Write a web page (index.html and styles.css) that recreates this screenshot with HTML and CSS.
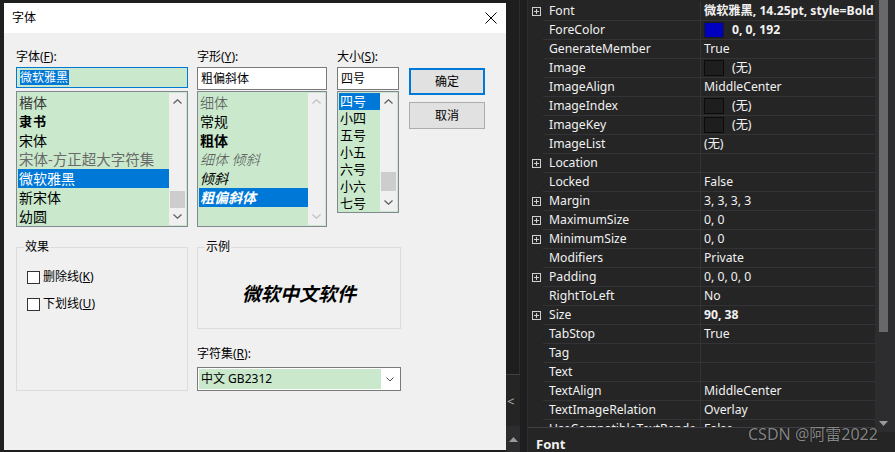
FILE: index.html
```html
<!DOCTYPE html>
<html lang="zh-CN">
<head>
<meta charset="utf-8">
<title>字体</title>
<link rel="stylesheet" href="styles.css">
</head>
<body>
<div class="screen">
  <div class="edge-left"></div>

  <div class="dialog">
    <div class="titlebar">
      <span class="title">字体</span>
      <svg class="close" viewBox="0 0 12 12" width="12" height="12"><path d="M0.5 0.5 L11.5 11.5 M11.5 0.5 L0.5 11.5" stroke="#000" stroke-width="1" fill="none"/></svg>
    </div>

    <div class="dlg-body">
      <div class="top-row">
        <div class="col col-font">
          <div class="lbl">字体(<u>F</u>):</div>
          <div class="input input-focus"><span class="sel-text">微软雅黑</span></div>
          <div class="list list-tall">
            <div class="items">
              <div class="item it-kai">楷体</div>
              <div class="item it-li">隶书</div>
              <div class="item">宋体</div>
              <div class="item it-gray">宋体-方正超大字符集</div>
              <div class="item selected">微软雅黑</div>
              <div class="item">新宋体</div>
              <div class="item">幼圆</div>
            </div>
            <div class="vscroll">
              <div class="sbtn"><svg viewBox="0 0 9 5" width="9" height="5"><path d="M0.5 4.5 L4.5 0.8 L8.5 4.5" stroke="#606060" stroke-width="1.3" fill="none"/></svg></div>
              <div class="strack"></div>
              <div class="sthumb"></div>
              <div class="sbtn"><svg viewBox="0 0 9 5" width="9" height="5"><path d="M0.5 0.5 L4.5 4.2 L8.5 0.5" stroke="#606060" stroke-width="1.3" fill="none"/></svg></div>
            </div>
          </div>
        </div>

        <div class="col col-style">
          <div class="lbl">字形(<u>Y</u>):</div>
          <div class="input">粗偏斜体</div>
          <div class="list list-tall">
            <div class="items">
              <div class="item it-thin">细体</div>
              <div class="item">常规</div>
              <div class="item it-bold">粗体</div>
              <div class="item it-thin it-italic">细体 倾斜</div>
              <div class="item it-italic">倾斜</div>
              <div class="item selected it-bold it-italic">粗偏斜体</div>
            </div>
            <div class="vscroll">
              <div class="sbtn"><svg viewBox="0 0 9 5" width="9" height="5"><path d="M0.5 4.5 L4.5 0.8 L8.5 4.5" stroke="#c2c2c2" stroke-width="1.3" fill="none"/></svg></div>
              <div class="strack"></div>
              <div class="sbtn"><svg viewBox="0 0 9 5" width="9" height="5"><path d="M0.5 0.5 L4.5 4.2 L8.5 0.5" stroke="#c2c2c2" stroke-width="1.3" fill="none"/></svg></div>
            </div>
          </div>
        </div>

        <div class="col col-size">
          <div class="lbl">大小(<u>S</u>):</div>
          <div class="input">四号</div>
          <div class="list list-short">
            <div class="items">
              <div class="item item-s selected">四号</div>
              <div class="item item-s">小四</div>
              <div class="item item-s">五号</div>
              <div class="item item-s">小五</div>
              <div class="item item-s">六号</div>
              <div class="item item-s">小六</div>
              <div class="item item-s">七号</div>
            </div>
            <div class="vscroll vscroll-s">
              <div class="sbtn"><svg viewBox="0 0 9 5" width="9" height="5"><path d="M0.5 4.5 L4.5 0.8 L8.5 4.5" stroke="#606060" stroke-width="1.3" fill="none"/></svg></div>
              <div class="strack"></div>
              <div class="sthumb sthumb-s"></div>
              <div class="sbtn"><svg viewBox="0 0 9 5" width="9" height="5"><path d="M0.5 0.5 L4.5 4.2 L8.5 0.5" stroke="#606060" stroke-width="1.3" fill="none"/></svg></div>
            </div>
          </div>
        </div>

        <div class="col col-btn">
          <div class="btn btn-default">确定</div>
          <div class="btn">取消</div>
        </div>
      </div>

      <div class="bottom-row">
        <fieldset class="group group-effects">
          <legend>效果</legend>
          <div class="checks">
            <div class="check"><span class="cbox"></span><span>删除线(<u>K</u>)</span></div>
            <div class="check"><span class="cbox"></span><span>下划线(<u>U</u>)</span></div>
          </div>
        </fieldset>
        <div class="right-col">
          <fieldset class="group group-sample">
            <legend>示例</legend>
            <div class="sample">微软中文软件</div>
          </fieldset>
          <div class="lbl lbl-charset">字符集(<u>R</u>):</div>
          <div class="combo">
            <div class="combo-text">中文 GB2312</div>
            <div class="combo-drop"><svg viewBox="0 0 8 5" width="8" height="5"><path d="M0.5 0.5 L4 4 L7.5 0.5" stroke="#555" stroke-width="1" fill="none"/></svg></div>
          </div>
        </div>
      </div>
    </div>
  </div>

  <div class="mid-strip">
    <div class="ms-top"></div>
    <div class="ms-tab"><span class="ms-x">&lt;</span></div>
    <div class="ms-bottom"><svg viewBox="0 0 9 5" width="9" height="5"><path d="M0 5 L4.5 0 L9 5 Z" fill="#9a9a9a"/></svg></div>
  </div>

  <div class="pgrid">
    <div class="pg-left"></div>
    <div class="pg-main">
      <div class="pg-rows">
        <div class="prow"><div class="pg-exp"><span class="plus"></span></div><div class="pname">Font</div><div class="pval bold">微软雅黑, 14.25pt, style=Bold</div></div>
        <div class="prow"><div class="pg-exp"></div><div class="pname">ForeColor</div><div class="pval"><span class="swatch swatch-blue"></span><span class="bold">0, 0, 192</span></div></div>
        <div class="prow"><div class="pg-exp"></div><div class="pname">GenerateMember</div><div class="pval">True</div></div>
        <div class="prow"><div class="pg-exp"></div><div class="pname">Image</div><div class="pval"><span class="swatch"></span>(无)</div></div>
        <div class="prow"><div class="pg-exp"></div><div class="pname">ImageAlign</div><div class="pval">MiddleCenter</div></div>
        <div class="prow"><div class="pg-exp"></div><div class="pname">ImageIndex</div><div class="pval"><span class="swatch"></span>(无)</div></div>
        <div class="prow"><div class="pg-exp"></div><div class="pname">ImageKey</div><div class="pval"><span class="swatch"></span>(无)</div></div>
        <div class="prow"><div class="pg-exp"></div><div class="pname">ImageList</div><div class="pval">(无)</div></div>
        <div class="prow"><div class="pg-exp"><span class="plus"></span></div><div class="pname">Location</div><div class="pval"></div></div>
        <div class="prow"><div class="pg-exp"></div><div class="pname">Locked</div><div class="pval">False</div></div>
        <div class="prow"><div class="pg-exp"><span class="plus"></span></div><div class="pname">Margin</div><div class="pval">3, 3, 3, 3</div></div>
        <div class="prow"><div class="pg-exp"><span class="plus"></span></div><div class="pname">MaximumSize</div><div class="pval">0, 0</div></div>
        <div class="prow"><div class="pg-exp"><span class="plus"></span></div><div class="pname">MinimumSize</div><div class="pval">0, 0</div></div>
        <div class="prow"><div class="pg-exp"></div><div class="pname">Modifiers</div><div class="pval">Private</div></div>
        <div class="prow"><div class="pg-exp"><span class="plus"></span></div><div class="pname">Padding</div><div class="pval">0, 0, 0, 0</div></div>
        <div class="prow"><div class="pg-exp"></div><div class="pname">RightToLeft</div><div class="pval">No</div></div>
        <div class="prow"><div class="pg-exp"><span class="plus"></span></div><div class="pname">Size</div><div class="pval bold">90, 38</div></div>
        <div class="prow"><div class="pg-exp"></div><div class="pname">TabStop</div><div class="pval">True</div></div>
        <div class="prow"><div class="pg-exp"></div><div class="pname">Tag</div><div class="pval"></div></div>
        <div class="prow"><div class="pg-exp"></div><div class="pname">Text</div><div class="pval"></div></div>
        <div class="prow"><div class="pg-exp"></div><div class="pname">TextAlign</div><div class="pval">MiddleCenter</div></div>
        <div class="prow"><div class="pg-exp"></div><div class="pname">TextImageRelation</div><div class="pval">Overlay</div></div>
        <div class="prow"><div class="pg-exp"></div><div class="pname">UseCompatibleTextRende</div><div class="pval">False</div></div>
      </div>
      <div class="pg-desc">Font</div>
    </div>
    <div class="pg-scroll">
      <div class="pg-thumb"></div>
      <div class="pg-track"></div>
      <div class="pg-down"><svg viewBox="0 0 9 5" width="9" height="5"><path d="M0 0 L4.5 5 L9 0 Z" fill="#9a9a9a"/></svg></div>
    </div>
    <div class="watermark">CSDN @阿雷2022</div>
  </div>
</div>
</body>
</html>
```
FILE: styles.css
```css
* { box-sizing: border-box; }
html, body { margin: 0; padding: 0; }
body {
  width: 895px; height: 452px; overflow: hidden;
  background: #1e1e1e;
  font-family: "Noto Sans", "Noto Sans CJK SC", sans-serif;
  font-size: 12px;
}
.screen { display: flex; height: 452px; }
.edge-left { width: 4px; background: #1f1f1f; }

/* ---------- dialog ---------- */
.dialog {
  width: 502px; height: 447px; margin-top: 3px;
  background: #f0f0f0; color: #000;
  display: flex; flex-direction: column;
}
.titlebar {
  height: 30px; background: #fff;
  display: flex; align-items: center; justify-content: space-between;
  padding: 0 9px 0 8px;
}
.title { line-height: 16px; }
.close { display: block; }

.dlg-body { padding: 17px 0 0 12px; }
.top-row { display: flex; align-items: flex-start; }
.col { display: flex; flex-direction: column; }
.col-font { width: 172px; }
.col-style { width: 130px; margin-left: 9px; }
.col-size { width: 62px; margin-left: 10px; }
.col-btn { width: 76px; margin-left: 10px; padding-top: 18px; gap: 7px; }

.lbl { height: 14px; line-height: 14px; margin-bottom: 3px; white-space: nowrap; }

.input {
  height: 23px; border: 1px solid #7a7a7a; background: #fff;
  padding: 0 3px; line-height: 21px; margin-bottom: 1px; white-space: nowrap;
}
.input-focus {
  height: 21px; border-color: #0078d7; background: #c9e8cc;
  padding: 2px 3px 0; line-height: 15px; margin-bottom: 3px;
}
.sel-text { display: inline-block; background: #0078d7; color: #fff; line-height: 15px; padding: 0 1px 0 0; }

.list {
  display: flex; border: 1px solid #828790; background: #c9e8cc; padding: 1px;
}
.list-tall { height: 136px; }
.list-short { height: 122px; }
.items { flex: 1; min-width: 0; overflow: hidden; }
.item { height: 19px; line-height: 19px; padding-left: 1px; white-space: nowrap; font-size: 14px; }
.item-s { height: 17px; line-height: 17px; font-size: 13px; }
.item.selected { background: #0078d7; color: #fff; }
.it-kai { color: #3a3a3a; }
.it-li { font-weight: bold; font-size: 13px; letter-spacing: 1px; }
.it-gray { color: #6a6a6a; font-size: 14.5px; }
.it-thin { color: #505050; font-weight: 300; }
.it-bold { font-weight: bold; }
.it-italic { font-style: italic; }

.vscroll { width: 17px; background: #f0f0f0; display: flex; flex-direction: column; }
.sbtn { height: 17px; display: flex; align-items: center; justify-content: center; }
.sbtn svg { display: block; }
.strack { flex: 1; }
.sthumb { height: 17px; background: #cdcdcd; margin: 0 1px; }
.sthumb-s { height: 19px; margin-bottom: 3px; }

.btn {
  height: 27px; background: #e1e1e1; border: 1px solid #adadad;
  display: flex; align-items: center; justify-content: center; line-height: 14px;
}
.btn-default { border: 2px solid #0078d7; }

/* bottom */
.bottom-row { display: flex; margin-top: 13px; align-items: flex-start; }
.group {
  margin: 0; padding: 0 7px; border: 1px solid #dcdcdc; min-width: 0;
}
.group legend { padding: 0 1px; line-height: 14px; font-size: 12px; }
.group-effects { width: 172px; height: 151px; }
.checks { padding: 15px 0 0 3px; display: flex; flex-direction: column; gap: 11px; }
.check { display: flex; align-items: center; height: 16px; gap: 3px; line-height: 16px; }
.cbox { width: 13px; height: 13px; border: 1px solid #333; background: #fff; display: block; }

.right-col { width: 204px; margin-left: 9px; display: flex; flex-direction: column; }
.group-sample { width: 204px; height: 89px; }
.sample {
  height: 74px; display: flex; align-items: center; justify-content: center;
  font-size: 19px; font-weight: bold; font-style: italic; padding-top: 3px;
  font-family: "Noto Sans CJK SC", sans-serif;
}
.lbl-charset { margin-top: 18px; margin-bottom: 6px; }
.combo {
  height: 24px; border: 1px solid #7a7a7a; background: #fff; padding: 1px;
  display: flex;
}
.combo-text { flex: 1; background: #c9e8cc; line-height: 20px; padding-left: 2px; }
.combo-drop { width: 18px; display: flex; align-items: center; justify-content: center; }
.combo-drop svg { display: block; }

/* ---------- strip between ---------- */
.mid-strip { width: 14px; display: flex; flex-direction: column; background: #1e1e1e; }
.ms-top { height: 374px; border-right: 1px solid #2d2d30; }
.ms-tab { height: 52px; background: #252526; border-top: 1px solid #3f3f46; display: flex; align-items: center; }
.ms-x { color: #b0b0b0; font-size: 13px; padding-left: 1px; }
.ms-bottom { flex: 1; background: #2d2d30; display: flex; align-items: center; justify-content: center; }

/* ---------- property grid ---------- */
.pgrid { width: 375px; display: flex; position: relative; background: #252526; }
.pg-left { width: 8px; background: #1e1e1e; border-right: 1px solid #2d2d30; }
.pg-main { width: 347px; display: flex; flex-direction: column; }
.pg-rows { height: 432px; overflow: hidden; padding-top: 2px; background: #252526; }
.prow { display: flex; height: 19px; color: #f1f1f1; font-size: 12.2px; }
.pg-exp { width: 15px; display: flex; align-items: center; justify-content: center; padding-left: 2px; }
.plus {
  width: 9px; height: 9px; border: 1px solid #d0d0d0; position: relative; display: block;
}
.plus::before { content: ""; position: absolute; left: 1px; top: 3px; width: 5px; height: 1px; background: #d0d0d0; }
.plus::after { content: ""; position: absolute; left: 3px; top: 1px; width: 1px; height: 5px; background: #d0d0d0; }
.pname {
  width: 158px; border-right: 1px solid #333337; border-bottom: 1px solid #333337;
  padding-left: 6px; line-height: 18px; white-space: nowrap; overflow: hidden;
}
.pval {
  flex: 1; min-width: 0; border-bottom: 1px solid #333337; padding-left: 3px;
  line-height: 18px; white-space: nowrap; overflow: hidden; display: flex; align-items: center;
}
.bold { font-weight: bold; }
.swatch {
  width: 20px; height: 16px; border: 1px solid #0c0c0c; background: #1e1e1e;
  display: block; margin-right: 8px; flex: none;
}
.swatch-blue { background: #0000c0; border-color: #1a1a1a; }
.pg-desc {
  flex: 1; background: #252526; border-top: 1px solid #3f3f46;
  font-weight: bold; color: #f1f1f1; font-size: 13px; padding: 8px 0 0 8px; line-height: 16px;
}
.pg-scroll { width: 20px; display: flex; flex-direction: column; background: #2d2d30; height: 432px; }
.pg-thumb { height: 332px; margin: 0 7px 0 4px; background: #686868; }
.pg-track { flex: 1; }
.pg-down { height: 18px; display: flex; align-items: center; justify-content: center; padding-right: 3px; }
.watermark {
  position: absolute; left: 228px; top: 424px;
  font-size: 16px; line-height: 20px; color: rgba(190,190,190,0.7);
  text-shadow: 0 0 1px #000; white-space: nowrap;
}
```
